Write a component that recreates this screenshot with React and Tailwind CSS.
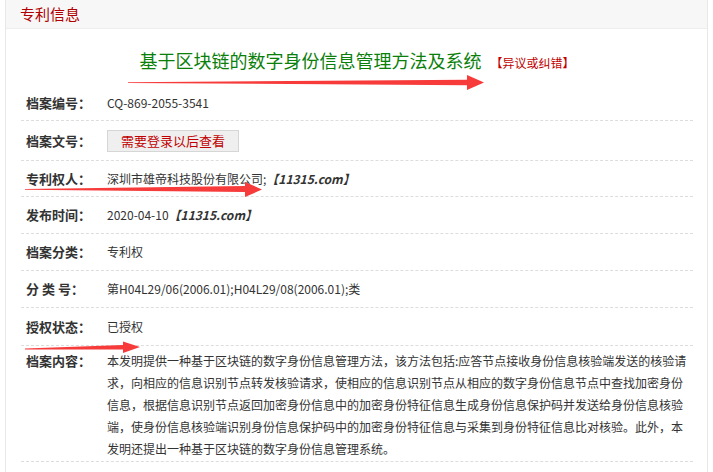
import React from "react";

const FONT = { fontFamily: '"Microsoft YaHei", "Noto Sans CJK SC", "Noto Sans", sans-serif' };

const rows = [
  { label: "档案编号：", value: "CQ-869-2055-3541", h: "h-[36px]" },
  { label: "档案文号：", button: true, h: "h-[40px]" },
  { label: "专利权人：", value: "深圳市雄帝科技股份有限公司;", tag: true, h: "h-[36px]" },
  { label: "发布时间：", value: "2020-04-10", tag: true, h: "h-[37px]" },
  { label: "档案分类：", value: "专利权", h: "h-[37px]" },
  { label: "分 类 号：", value: "第H04L29/06(2006.01);H04L29/08(2006.01);类", h: "h-[37px]" },
  { label: "授权状态：", value: "已授权", h: "h-[38px]" },
];

const summary =
  "本发明提供一种基于区块链的数字身份信息管理方法，该方法包括:应答节点接收身份信息核验端发送的核验请求，向相应的信息识别节点转发核验请求，使相应的信息识别节点从相应的数字身份信息节点中查找加密身份信息，根据信息识别节点返回加密身份信息中的加密身份特征信息生成身份信息保护码并发送给身份信息核验端，使身份信息核验端识别身份信息保护码中的加密身份特征信息与采集到身份特征信息比对核验。此外，本发明还提出一种基于区块链的数字身份信息管理系统。";

function Tag() {
  return <b className="italic font-bold text-[#333]">【11315.com】</b>;
}

function Arrows() {
  // red annotation arrows painted over the screenshot
  return (
    <svg
      className="absolute left-0 top-0 pointer-events-none"
      width="713"
      height="472"
      viewBox="0 0 713 472"
    >
      <polygon
        fill="#f73b3b"
        points="128,82.3 467,79.8 467,75 484,82.5 467,90 467,85.2 128,82.9"
      />
      <polygon
        fill="#f73b3b"
        points="25,189 245,186 245,182 262,189.5 245,197 245,192 25,189.8"
      />
      <polygon
        fill="#f73b3b"
        points="25,348.6 123,345 123,341.5 140,347 123,353 123,349.5 25,349.4"
      />
    </svg>
  );
}

export default function App() {
  return (
    <div className="relative w-[713px] h-[472px] bg-white overflow-hidden" style={FONT}>
      <div className="ml-[5px] w-[703px] h-[472px] border-x border-[#e8e8e8]">
        <div className="h-[29px] bg-[#f7f7f7] border-b border-[#eeeeee] pl-[14px] flex items-center">
          <span className="text-[15px] text-[#b00000]">专利信息</span>
        </div>

        <div className="px-[15px] pr-[14px]">
          <div className="pt-[16px] pb-[7px] text-center leading-[30px]">
            <span className="text-[18px] font-normal text-[#0a800a]">基于区块链的数字身份信息管理方法及系统</span>
            <span className="ml-[9px] text-[12px] text-[#c00000]">【异议或纠错】</span>
          </div>

          {rows.map((r) => (
            <div
              key={r.label}
              className={`flex items-center border-b border-dashed border-[#dddddd] ${r.h}`}
            >
              <div className="w-[86px] shrink-0 pl-[5px] text-[13px] font-bold text-[#333]">
                {r.label}
              </div>
              {r.button ? (
                <div className="w-[132px] h-[22px] bg-[#efefef] border border-[#d6d6d6] flex items-center justify-center text-[13px] text-[#c00000]">
                  需要登录以后查看
                </div>
              ) : (
                <div className="text-[12px] text-[#333]">
                  {r.value}
                  {r.tag && <Tag />}
                </div>
              )}
            </div>
          ))}

          <div className="flex items-start border-b border-dashed border-[#dddddd] pt-[4px] pb-[1px]">
            <div className="w-[86px] shrink-0 pl-[5px] text-[13px] font-bold text-[#333] leading-[22px]">
              档案内容：
            </div>
            <p className="w-[584px] text-[12px] leading-[22px] text-[#333]">{summary}</p>
          </div>
        </div>
      </div>
      <Arrows />
    </div>
  );
}
